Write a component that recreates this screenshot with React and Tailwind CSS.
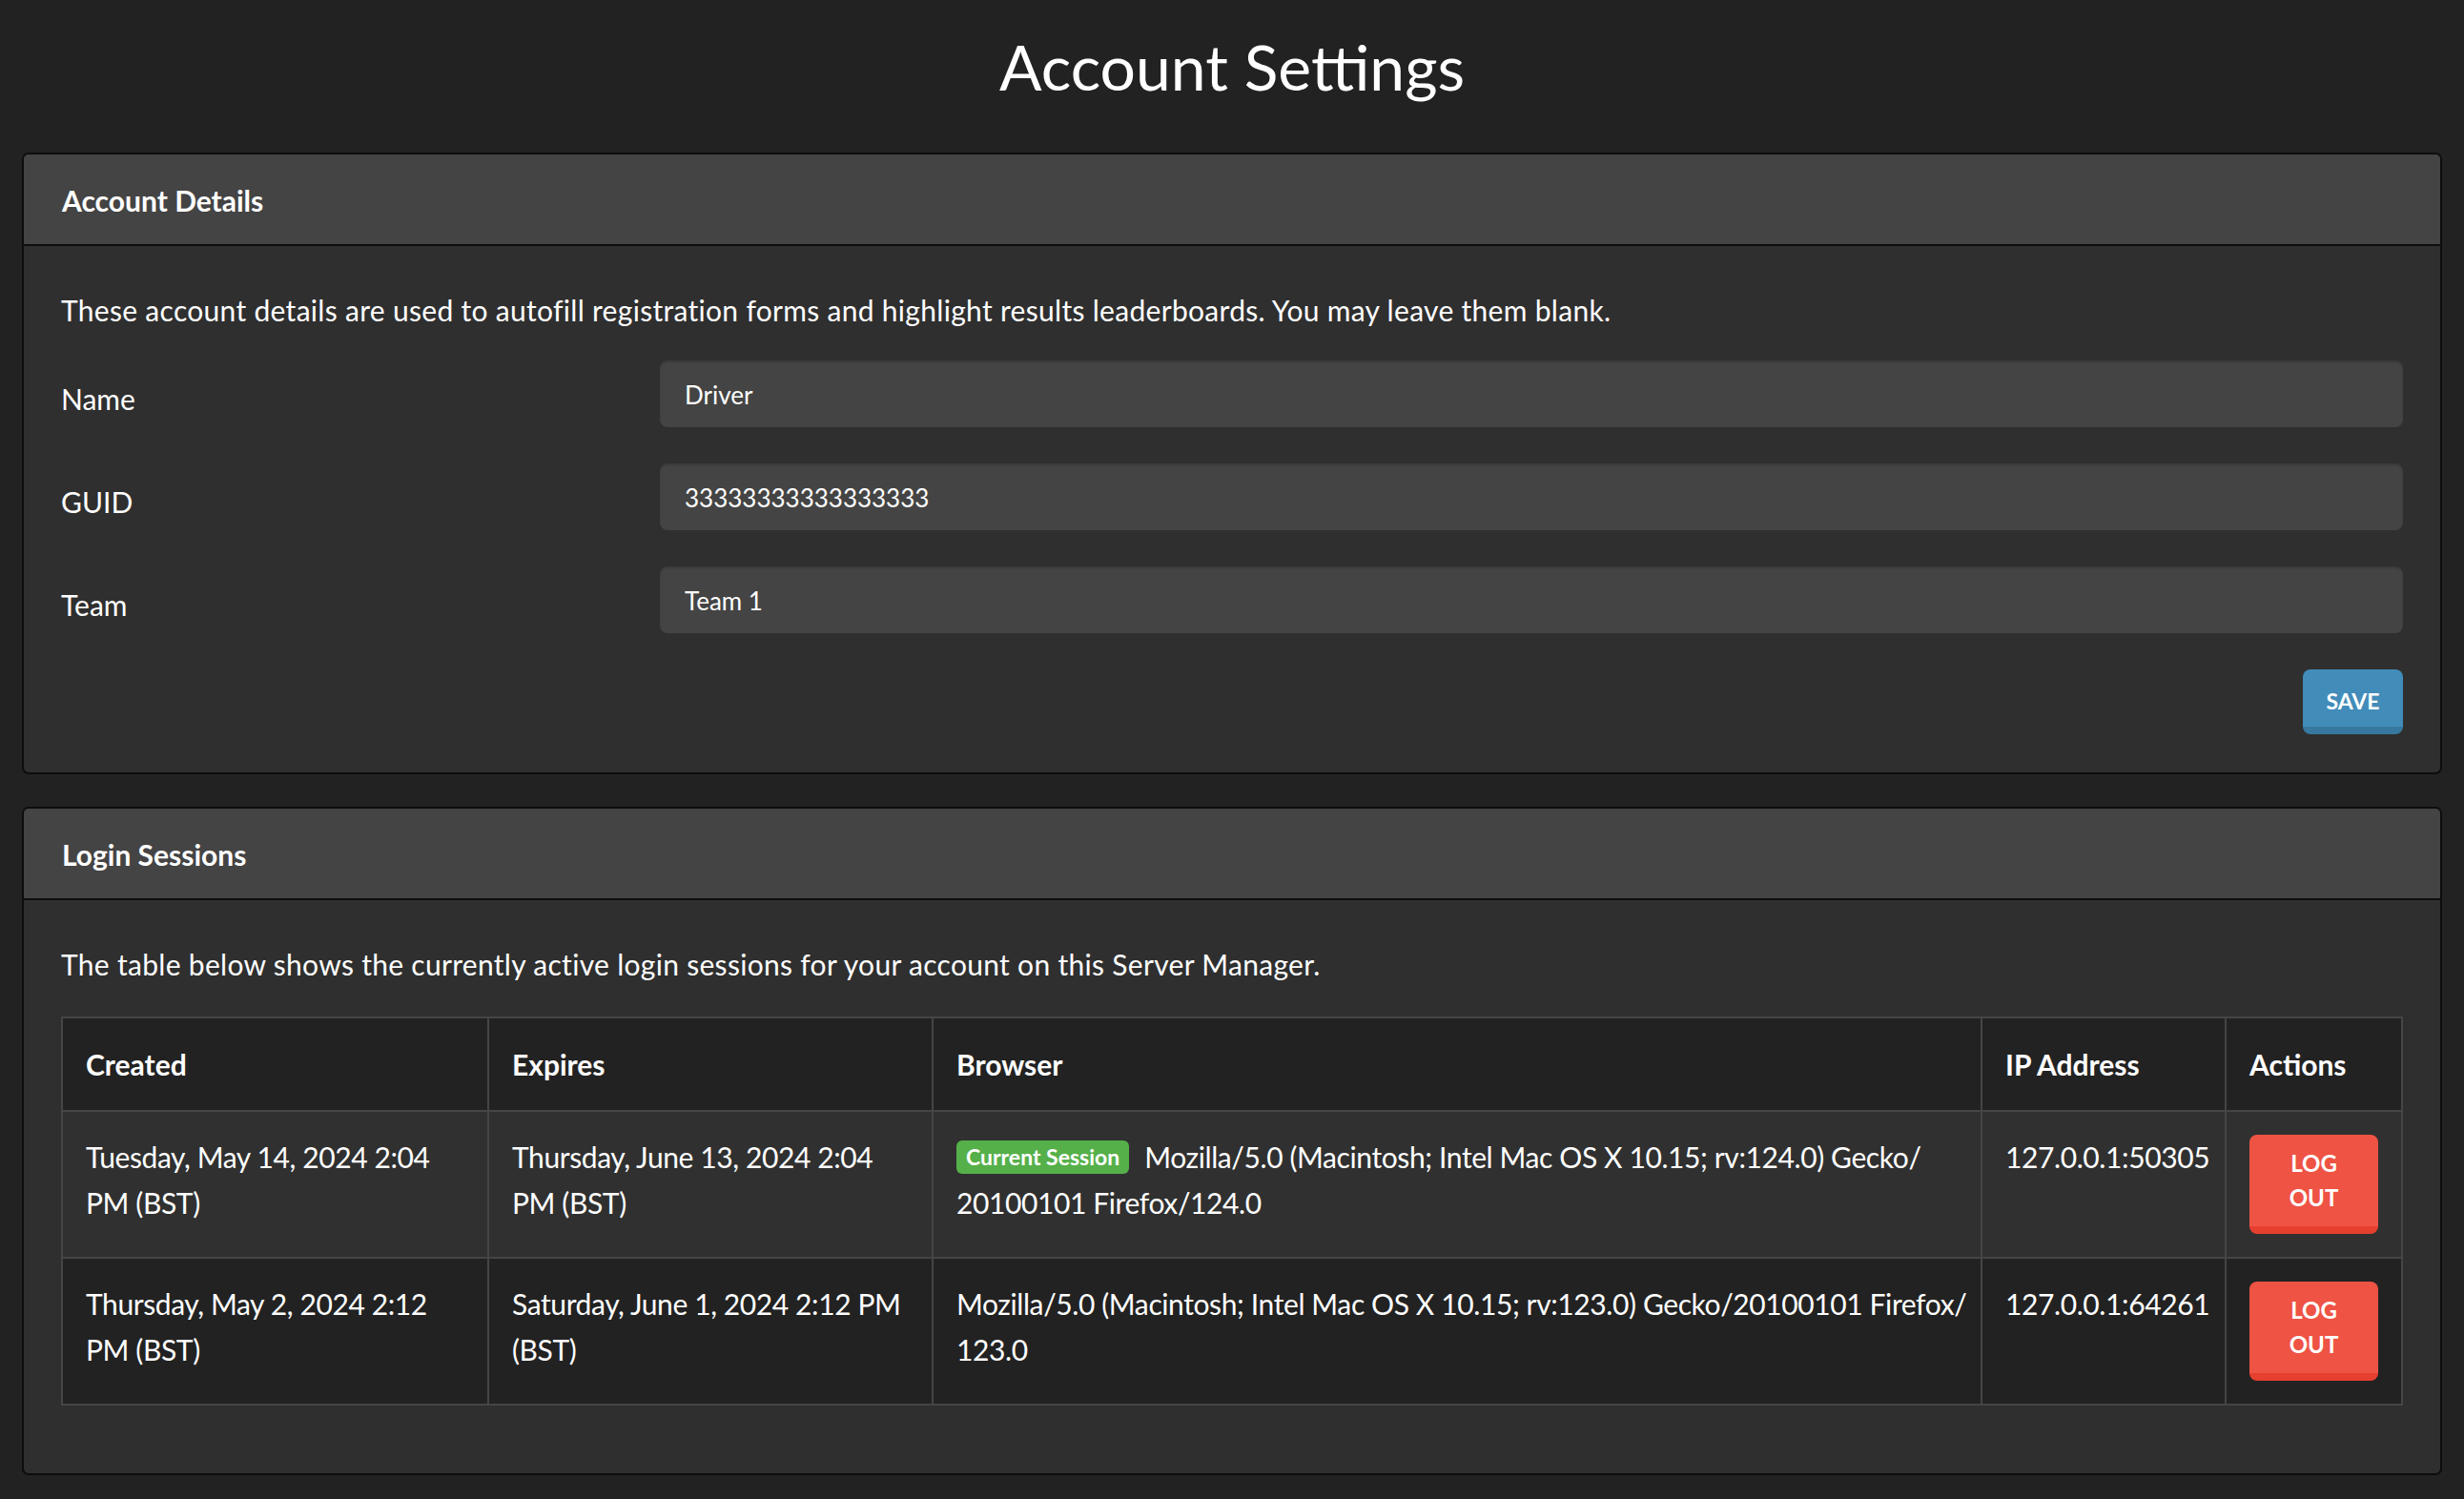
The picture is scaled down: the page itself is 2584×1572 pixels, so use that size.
import React from "react";

const sessions = [
  {
    created: "Tuesday, May 14, 2024 2:04 PM (BST)",
    expires: "Thursday, June 13, 2024 2:04 PM (BST)",
    current: true,
    browser: ["Mozilla/5.0 (Macintosh; Intel Mac OS X 10.15; rv:124.0) Gecko/", "20100101 Firefox/124.0"],
    ip: "127.0.0.1:50305",
  },
  {
    created: "Thursday, May 2, 2024 2:12 PM (BST)",
    expires: "Saturday, June 1, 2024 2:12 PM (BST)",
    current: false,
    browser: ["Mozilla/5.0 (Macintosh; Intel Mac OS X 10.15; rv:123.0) Gecko/20100101 Firefox/", "123.0"],
    ip: "127.0.0.1:64261",
  },
];

function Card({ title, children }) {
  return (
    <section className="border-2 border-[#0d0d0d] rounded-[7px] overflow-hidden bg-[#2f2f2f]">
      <header className="h-[96px] flex items-center px-[40px] pt-[3px] bg-[#444444] border-b-2 border-[#0d0d0d]">
        <h2 className="text-[30px] font-bold text-white">{title}</h2>
      </header>
      <div className="px-[39px] pt-[43px]">{children}</div>
    </section>
  );
}

function Field({ label, value }) {
  return (
    <div className="flex items-center">
      <label className="w-[628px] text-[30px] leading-[48px] text-white pt-[9px]">{label}</label>
      <input
        readOnly
        value={value}
        className="flex-1 h-[70px] rounded-[8px] bg-[#444444] px-[26px] pt-[2px] text-[26px] text-white outline-none shadow-[inset_0_2px_2px_rgba(0,0,0,0.15)]"
        style={{ fontFamily: "inherit" }}
      />
    </div>
  );
}

const border = "border-2 border-[#454545] px-[24px] align-top";
const head = `${border} pt-[24px] pb-[24px] text-left font-bold`;
const cell = `${border} pt-[23px] pb-[25px]`;

export default function App() {
  return (
    <div className="min-h-screen bg-[#222222] text-white px-[23px] pb-[30px]" style={{ fontFamily: "Lato, sans-serif" }}>
      <h1 className="pt-[22px] text-center text-[66px] leading-[96px] font-normal">Account Settings</h1>

      <div className="mt-[42px] flex flex-col gap-[34px]">
        <Card title="Account Details">
          <p className="text-[30px] leading-[48px] tracking-[0.3px]">
            These account details are used to autofill registration forms and highlight results leaderboards. You may leave them blank.
          </p>
          <div className="mt-[29px] flex flex-col gap-[38px]">
            <Field label="Name" value="Driver" />
            <Field label="GUID" value="33333333333333333" />
            <Field label="Team" value="Team 1" />
          </div>
          <div className="flex justify-end mt-[38px] pb-[40px]">
            <button className="w-[105px] h-[68px] rounded-[8px] bg-[#428cb9] border-b-[8px] border-[#37789f] text-[23px] font-bold text-white uppercase pt-[6px]">
              Save
            </button>
          </div>
        </Card>

        <Card title="Login Sessions">
          <p className="text-[30px] leading-[48px] tracking-[0.3px]">
            The table below shows the currently active login sessions for your account on this Server Manager.
          </p>
          <table className="mt-[31px] mb-[71px] w-full table-fixed border-collapse border-2 border-[#454545] text-[30px] leading-[48px]">
            <colgroup>
              <col className="w-[447px]" />
              <col className="w-[466px]" />
              <col className="w-[1100px]" />
              <col className="w-[256px]" />
              <col />
            </colgroup>
            <thead>
              <tr className="bg-[#222222]">
                {["Created", "Expires", "Browser", "IP Address", "Actions"].map((h) => (
                  <th key={h} className={head}>
                    {h}
                  </th>
                ))}
              </tr>
            </thead>
            <tbody className="tracking-[-0.4px]">
              {sessions.map((s, i) => (
                <tr key={s.ip} className={i % 2 === 0 ? "bg-[#303030]" : "bg-[#222222]"}>
                  <td className={cell}>{s.created}</td>
                  <td className={cell}>{s.expires}</td>
                  <td className={cell}>
                    {s.current && (
                      <span className="inline-block align-[3px] h-[35px] px-[10px] mr-[16px] rounded-[6px] bg-[#56b04a] text-[23px] leading-[35px] font-bold tracking-normal">
                        Current Session
                      </span>
                    )}
                    <span className="whitespace-nowrap">{s.browser[0]}</span>
                    <wbr />
                    {s.browser[1]}
                  </td>
                  <td className={cell}>{s.ip}</td>
                  <td className={`${border} pt-[24px] pb-[24px]`}>
                    <button className="w-[135px] h-[104px] rounded-[8px] bg-[#ee5344] border-b-[8px] border-[#e53f2f] px-[20px] text-[24px] leading-[36px] font-bold uppercase text-white tracking-normal">
                      Log Out
                    </button>
                  </td>
                </tr>
              ))}
            </tbody>
          </table>
        </Card>
      </div>
    </div>
  );
}
